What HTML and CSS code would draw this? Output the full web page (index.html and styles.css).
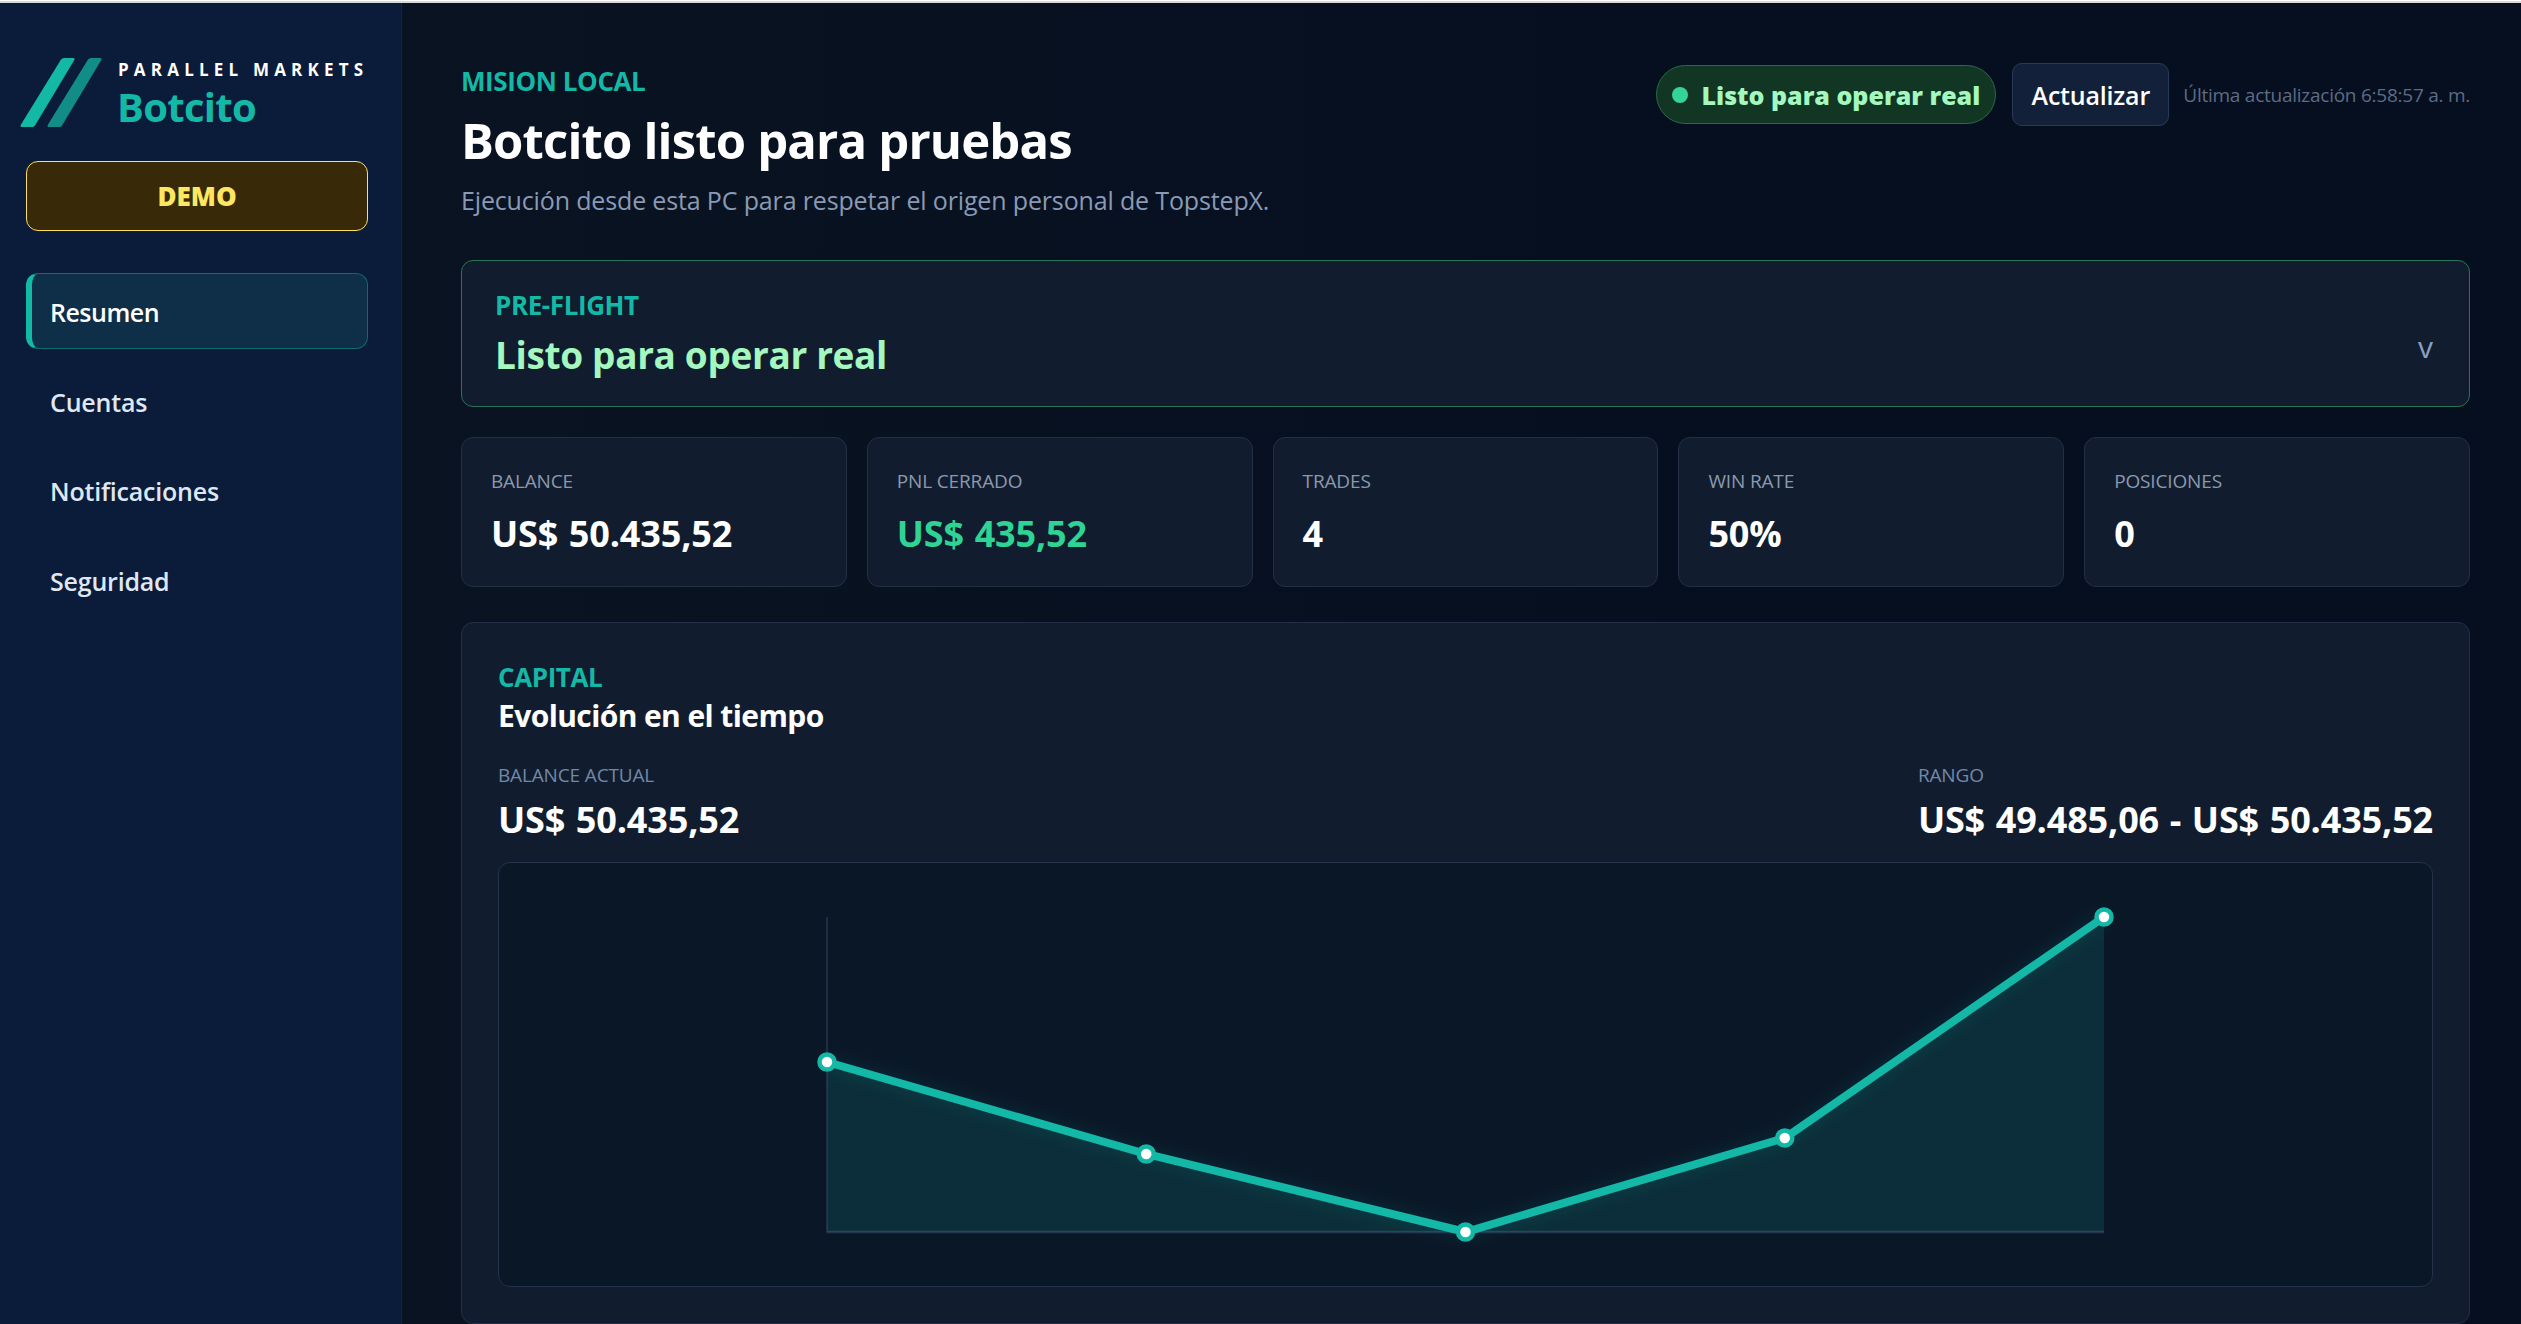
FILE: index.html
```html
<!DOCTYPE html>
<html lang="es">
<head>
<meta charset="utf-8">
<title>Botcito</title>
<link rel="stylesheet" href="styles.css">
</head>
<body>
<div class="topStrip"></div>
<div class="app">
  <aside class="sidebar">
    <div class="brand">
      <svg class="brandMark" width="82" height="70" viewBox="0 0 82 70">
        <path d="M41 1.5 Q42 0 44 0 H53 Q55.500 0 54 2.500 L15 67.500 Q14 69 12 69 H2 Q-0.500 69 1 66.500 Z" fill="#14b8a6"/>
        <path d="M68 1.500 Q69 0 71 0 H80 Q82.500 0 81 2.500 L42 67.500 Q41 69 39 69 H29 Q26.500 69 28 66.500 Z" fill="#14b8a6" opacity="0.72"/>
      </svg>
      <div class="brandText">
        <div class="brandTop">PARALLEL MARKETS</div>
        <div class="brandName">Botcito</div>
      </div>
    </div>
    <div class="demoBadge">DEMO</div>
    <nav class="nav">
      <a class="navItem active">Resumen</a>
      <a class="navItem">Cuentas</a>
      <a class="navItem">Notificaciones</a>
      <a class="navItem">Seguridad</a>
    </nav>
  </aside>

  <main class="content">
    <header class="pageHead">
      <div>
        <div class="eyebrow">MISION LOCAL</div>
        <h1 class="pageTitle">Botcito listo para pruebas</h1>
        <p class="pageSub">Ejecución desde esta PC para respetar el origen personal de TopstepX.</p>
      </div>
      <div class="headTools">
        <span class="statusPill"><i class="statusDot"></i>Listo para operar real</span>
        <button class="refreshBtn">Actualizar</button>
        <span class="lastUpdate">Última actualización 6:58:57 a. m.</span>
      </div>
    </header>

    <section class="preflight">
      <div>
        <div class="eyebrow small">PRE-FLIGHT</div>
        <div class="preflightValue">Listo para operar real</div>
      </div>
      <span class="chevron">v</span>
    </section>

    <section class="stats">
      <div class="statCard"><div class="statLabel">BALANCE</div><div class="statValue">US$ 50.435,52</div></div>
      <div class="statCard"><div class="statLabel">PNL CERRADO</div><div class="statValue green">US$ 435,52</div></div>
      <div class="statCard"><div class="statLabel">TRADES</div><div class="statValue">4</div></div>
      <div class="statCard"><div class="statLabel">WIN RATE</div><div class="statValue">50%</div></div>
      <div class="statCard"><div class="statLabel">POSICIONES</div><div class="statValue">0</div></div>
    </section>

    <section class="capital">
      <div class="eyebrow small">CAPITAL</div>
      <h2 class="capitalTitle">Evolución en el tiempo</h2>
      <div class="capitalRow">
        <div>
          <div class="statLabel blue">BALANCE ACTUAL</div>
          <div class="statValue tight">US$ 50.435,52</div>
        </div>
        <div>
          <div class="statLabel blue">RANGO</div>
          <div class="statValue tight">US$ 49.485,06 - US$ 50.435,52</div>
        </div>
      </div>
      <div class="chartBox">
        <svg class="chart" width="1932" height="423" viewBox="0 0 1932 423">
          <defs>
            <filter id="glow" x="-5%" y="-20%" width="110%" height="140%">
              <feGaussianBlur stdDeviation="8"/>
            </filter>
          </defs>
          <path d="M328 54 V369 H1605" fill="none" stroke="#24364f" stroke-width="1.500"/>
          <path d="M328 369 H1605" fill="none" stroke="#24364f" stroke-width="2.500"/>
          <path d="M328 199 L647.250 291 L966.500 369 L1285.750 275 L1605 54 V369 H328 Z" fill="#14b8a6" fill-opacity="0.15"/>
          <path d="M328 199 L647.250 291 L966.500 369 L1285.750 275 L1605 54" fill="none" stroke="#14b8a6" stroke-opacity="0.18" stroke-width="8" filter="url(#glow)"/>
          <path d="M328 199 L647.250 291 L966.500 369 L1285.750 275 L1605 54" fill="none" stroke="#14b8a6" stroke-width="8"/>
          <g fill="#fff" stroke="#14b8a6" stroke-width="4.500">
            <circle cx="328" cy="199" r="7.500"/>
            <circle cx="647.250" cy="291" r="7.500"/>
            <circle cx="966.500" cy="369" r="7.500"/>
            <circle cx="1285.750" cy="275" r="7.500"/>
            <circle cx="1605" cy="54" r="7.500"/>
          </g>
        </svg>
      </div>
    </section>
  </main>
</div>
</body>
</html>
```

FILE: styles.css
```css
* {
  box-sizing: border-box;
}
html, body {
  margin: 0;
  padding: 0;
  height: 100%;
  overflow: hidden;
  background: #050d1c;
}
body {
  font-family: "Open Sans", "Noto Sans", sans-serif;
  color: #fff;
}

.topStrip {
  height: 3px;
  background: #d9d9d9;
  border-top: 1px solid #fff;
}
.app {
  display: flex;
  height: 1321px;
}

/* Sidebar */
.sidebar {
  width: 402px;
  flex: none;
  padding: 55px 33px 0 26px;
  background: #0b1c3b;
  border-right: 1px solid #17233a;
}
.brand {
  display: flex;
  align-items: flex-start;
  margin-left: -6px;
  height: 103px;
}
.brandMark {
  flex: none;
  display: block;
}
.brandText {
  margin-left: 15px;
}
.brandTop {
  margin-left: 1px;
  font-size: 17px;
  font-weight: 700;
  letter-spacing: 5.2px;
  line-height: 24px;
  white-space: nowrap;
}
.brandName {
  font-size: 40px;
  font-weight: 700;
  line-height: 50px;
  color: #14b8a6;
  letter-spacing: -0.7px;
}
.demoBadge {
  height: 70px;
  border: 1px solid #fde05d;
  border-radius: 12px;
  background: #382a08;
  color: #fde762;
  font-size: 26px;
  font-weight: 800;
  display: flex;
  align-items: center;
  justify-content: center;
}
.nav {
  margin-top: 42px;
  display: flex;
  flex-direction: column;
  gap: 13.500px;
}
.navItem {
  height: 76px;
  display: flex;
  align-items: center;
  padding: 2px 0 0 24px;
  font-size: 25px;
  font-weight: 600;
  color: #dfe7f2;
  letter-spacing: -0.2px;
}
.navItem.active {
  background: #0e2f47;
  border: 1px solid #0f6a72;
  border-left: 6px solid #14b8a6;
  border-radius: 12px;
  padding-left: 18px;
  color: #fff;
  letter-spacing: -0.5px;
}

/* Main column */
.content {
  flex: 1;
  min-width: 0;
  padding: 61px 51px 0 59px;
  background: linear-gradient(90deg, #0a1321, #060f20 60%, #060f1f);
}
.pageHead {
  display: flex;
  justify-content: space-between;
  align-items: flex-start;
  height: 196px;
}
.eyebrow {
  font-size: 26px;
  font-weight: 700;
  line-height: 34px;
  color: #14b8a6;
  letter-spacing: -0.4px;
}
.pageTitle {
  margin: 8px 0 0;
  font-size: 49px;
  font-weight: 700;
  line-height: 68px;
  letter-spacing: -0.82px;
}
.pageSub {
  margin: 9px 0 0;
  font-size: 25px;
  line-height: 34px;
  color: #8a9ab5;
  letter-spacing: -0.15px;
}
.headTools {
  display: flex;
  align-items: center;
  gap: 16px;
  height: 63px;
  margin-top: -1px;
}
.statusPill {
  display: flex;
  align-items: center;
  height: 59px;
  padding: 0 15px;
  border: 1px solid #2a6b47;
  border-radius: 30px;
  background: #113623;
  color: #a3f7bf;
  font-size: 25px;
  font-weight: 800;
}
.statusDot {
  width: 16px;
  height: 16px;
  border-radius: 50%;
  background: #34d399;
  margin-right: 13px;
}
.refreshBtn {
  height: 63px;
  width: 157px;
  background: #12203a;
  border: 1px solid #2a3a55;
  border-radius: 10px;
  color: #fff;
  font-family: inherit;
  font-size: 25px;
  font-weight: 600;
  letter-spacing: -0.2px;
  padding: 0;
}
.lastUpdate {
  margin-left: -2px;
  color: #5d6b85;
  font-size: 19px;
  letter-spacing: -0.25px;
}

/* Cards */
.preflight {
  height: 147px;
  display: flex;
  justify-content: space-between;
  align-items: center;
  padding: 0 36px 0 33px;
  background: #111d2e;
  border: 1px solid #2a7455;
  border-radius: 12px;
}
.eyebrow.small {
  line-height: 30px;
}
.preflight > div {
  margin-top: 3px;
}
.preflightValue {
  margin-top: 10px;
  font-size: 37px;
  font-weight: 700;
  line-height: 50px;
  color: #a3f7bf;
  letter-spacing: -0.35px;
}
.chevron {
  font-size: 30px;
  line-height: 34px;
  color: #8aa0c0;
  margin-top: 26px;
}
.stats {
  margin-top: 30px;
  display: grid;
  grid-template-columns: repeat(5, 1fr);
  gap: 20px;
}
.statCard {
  height: 150px;
  padding: 28px 29px 0;
  background: #111d2e;
  border: 1px solid #222f44;
  border-radius: 12px;
}
.statLabel {
  font-size: 19px;
  line-height: 30px;
  color: #8c99ad;
  letter-spacing: -0.15px;
}
.statLabel.blue {
  color: #7388a8;
}
.statValue {
  margin-top: 14px;
  font-size: 36px;
  font-weight: 700;
  line-height: 48px;
  letter-spacing: -0.15px;
  word-spacing: 1.5px;
}
.statValue.green {
  color: #2fd394;
}
.statValue.tight {
  margin-top: 6px;
}
.capital {
  margin-top: 35px;
  height: 702px;
  padding: 39px 36px 0;
  background: #111d2e;
  border: 1px solid #222f44;
  border-radius: 12px;
}
.capitalTitle {
  margin: 3px 0 0;
  font-size: 30px;
  font-weight: 700;
  line-height: 42px;
  letter-spacing: -0.6px;
}
.capitalRow {
  display: flex;
  justify-content: space-between;
  margin-top: 23px;
}
.chartBox {
  margin-top: 18px;
  height: 425px;
  background: #0a1727;
  border: 1px solid #24324a;
  border-radius: 12px;
}
.chart {
  display: block;
}
```
